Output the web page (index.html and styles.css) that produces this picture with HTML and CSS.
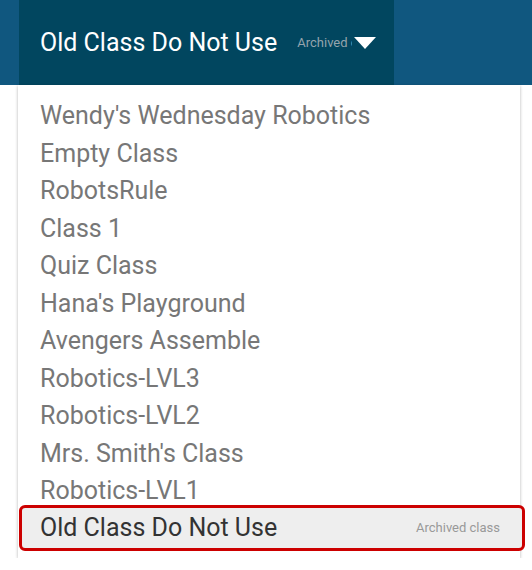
FILE: index.html
```html
<!DOCTYPE html>
<html lang="en">
<head>
  <meta charset="UTF-8">
  <meta name="viewport" content="width=device-width, initial-scale=1">
  <title>Class picker</title>
  <link rel="stylesheet" href="styles.css">
</head>
<body>

  <div class="topbar">
    <div class="current">
      <span class="current-name">Old Class Do Not Use</span>
      <span class="current-tag">Archived class</span>
      <svg class="caret" width="22" height="12" viewBox="0 0 22 12"><path d="M0 0 L22 0 L11 12 Z" fill="#fff"/></svg>
    </div>
  </div>

  <ul class="menu">
    <li>Wendy's Wednesday Robotics</li>
    <li>Empty Class</li>
    <li>RobotsRule</li>
    <li>Class 1</li>
    <li>Quiz Class</li>
    <li>Hana's Playground</li>
    <li>Avengers Assemble</li>
    <li>Robotics-LVL3</li>
    <li>Robotics-LVL2</li>
    <li>Mrs. Smith's Class</li>
    <li>Robotics-LVL1</li>
    <li class="active"><span>Old Class Do Not Use</span><span class="tag">Archived class</span></li>
  </ul>

</body>
</html>
```

FILE: styles.css
```css
body { margin: 0; font-family: Roboto, "Liberation Sans", sans-serif; background: #fff; }
.topbar { height: 85px; background: #10577f; padding-left: 19px; }
.current { width: 375px; height: 85px; background: #01465f; display: flex; align-items: center; padding-left: 21px; box-sizing: border-box; }
.current-name { color: #fff; font-size: 25px; }
.current-tag { color: #94a4ad; font-size: 13px; margin-left: 20px; width: 55px; overflow: hidden; white-space: nowrap; }
.caret { margin-left: 2px; margin-top: 1px; flex: none; }
.menu { list-style: none; margin: 0 0 0 18px; padding: 12px 0 7px; width: 502px; background: #fff; box-shadow: 0 1px 3px rgba(0,0,0,0.3); }
.menu li { height: 37.5px; line-height: 37.5px; font-size: 25px; color: #777; padding-left: 22px; }
.menu li.active { display: flex; justify-content: space-between; align-items: center; height: 40px; margin: -5px -5px 0 1px; padding: 0 22px 0 18px; background: #eee; color: #333; border: 3px solid #c00; border-radius: 6px; }
.menu li.active .tag { font-size: 13px; color: #999; }
```
